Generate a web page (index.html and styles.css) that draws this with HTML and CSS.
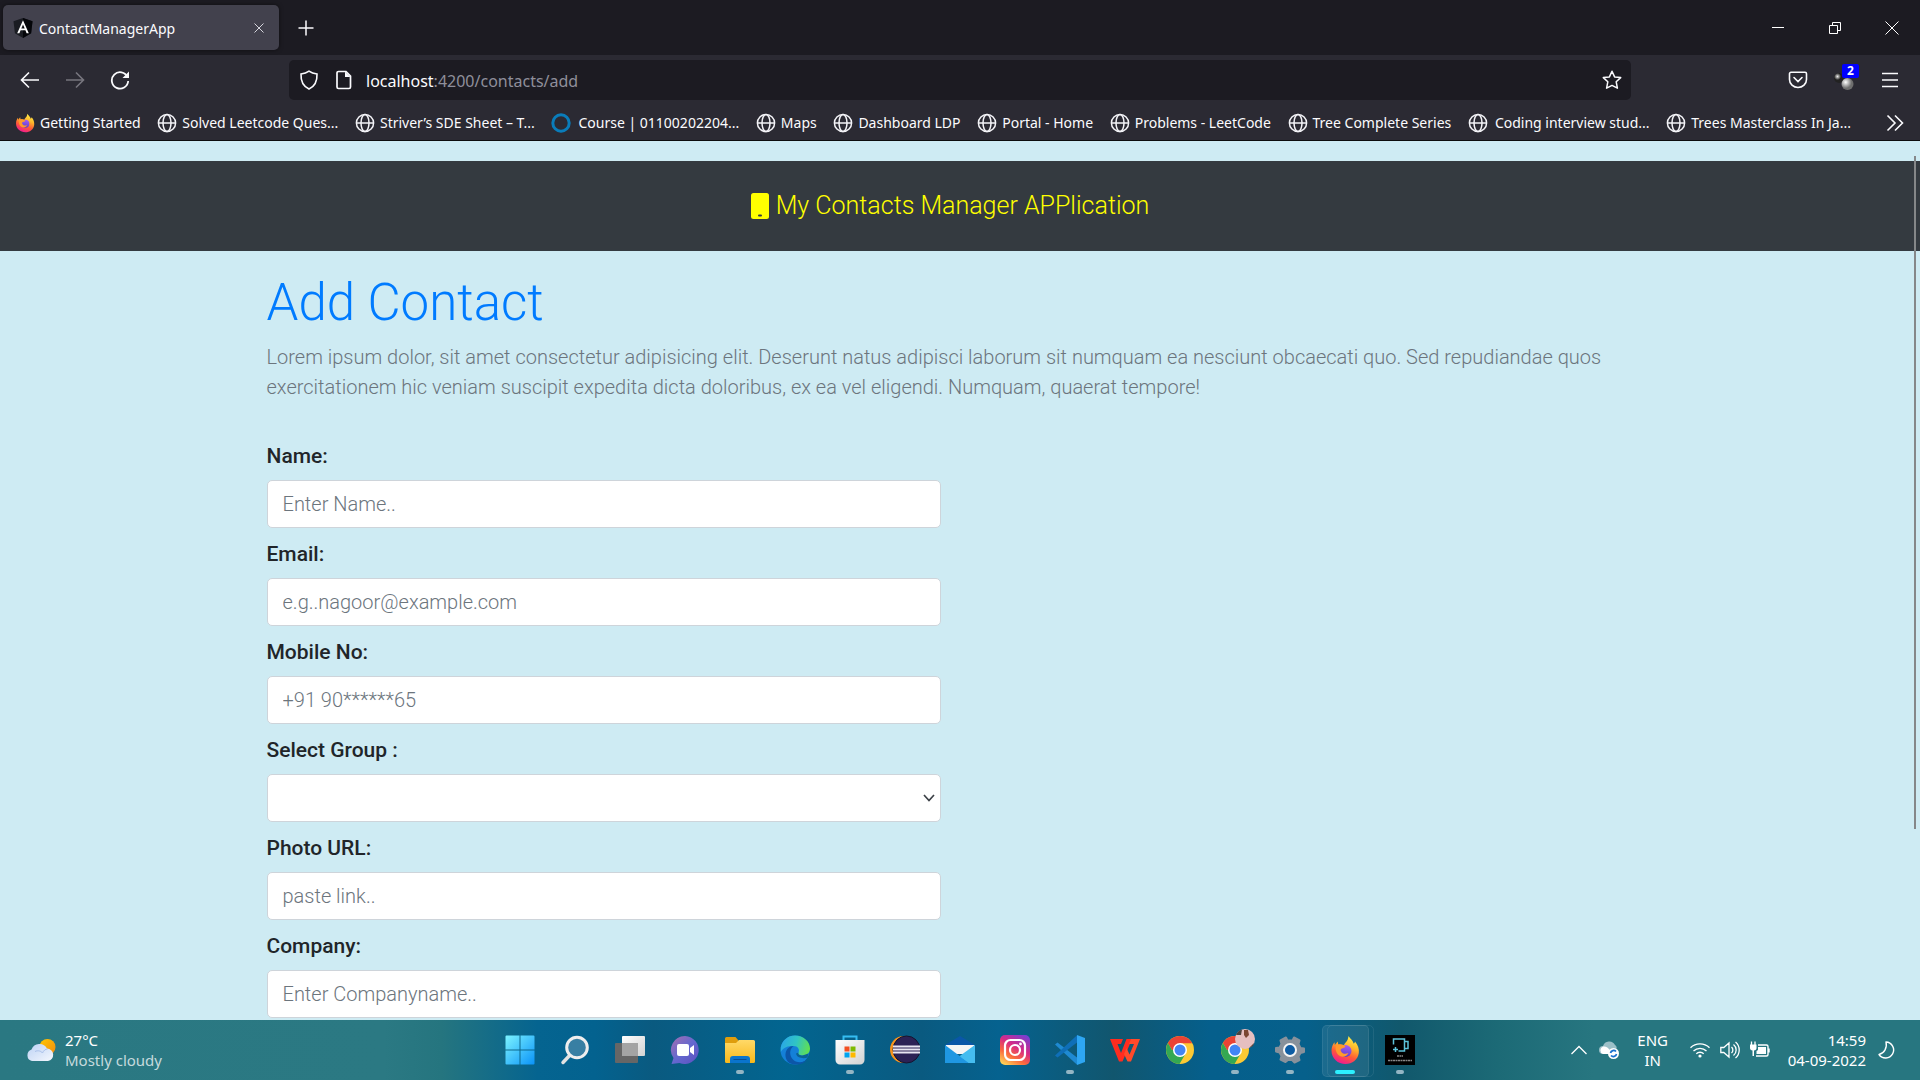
FILE: index.html
```html
<!DOCTYPE html>
<html lang="en">
<head>
<meta charset="utf-8">
<title>ContactManagerApp</title>
<link rel="stylesheet" href="styles.css">
</head>
<body>
<svg class="defs" aria-hidden="true">
  <defs>
    <linearGradient id="fx" x1="0.7" y1="0" x2="0.3" y2="1"><stop offset="0" stop-color="#fff24a"/><stop offset="0.35" stop-color="#ffb52a"/><stop offset="0.65" stop-color="#ff5a36"/><stop offset="1" stop-color="#f0149a"/></linearGradient>
    <linearGradient id="fxb" x1="0.6" y1="0" x2="0.4" y2="1"><stop offset="0" stop-color="#a35cf5"/><stop offset="1" stop-color="#5c3fc8"/></linearGradient>
    <symbol id="firefox" viewBox="0 0 30 30">
      <path fill="url(#fx)" d="M18.500 1c1 2 4.600 4.200 5 7.500 1-.4 1.400-1.200 1.500-2 3 3.500 4.300 7.500 3.800 11.500C28 24.500 22.300 29 15.500 29 8 29 1.500 23.700 1.500 15.500c0-3.700 1.500-6.500 3-8.300L4.800 10l3-3.500.4 3c1.800-.3 3.800.1 5.500 1 1-2.500 3.300-4 4-6 .4-1.200.6-2.200.8-3.500z"/>
      <circle cx="15.500" cy="16" r="6" fill="url(#fxb)"/>
      <path fill="#ff9a2b" d="M6 10.500c3-1.800 7-1.600 9.500 1-1 1.700-3.500 1.400-4.500 2.500s0 3 1.800 4.200c1.800 1.100 3.700.6 5.700-.2-1.500 3.500-5.500 4.500-8.500 3C6.500 19.300 4.800 14.500 6 10.500z"/>
    </symbol>
    <symbol id="globe" viewBox="0 0 20 20"><g fill="none" stroke="#f4f4f8" stroke-width="1.500"><circle cx="10" cy="10" r="8.600"/><ellipse cx="10" cy="10" rx="4" ry="8.600"/><path d="M1.400 10h17.200"/></g></symbol>
    <symbol id="chrome" viewBox="0 0 30 30">
      <circle cx="15" cy="15" r="14" fill="#fcc934"/>
      <path fill="#ea4335" d="M2.900 8A14 14 0 0 1 27.200 8.200H15V15H7z"/>
      <path fill="#34a853" d="M2.900 8A14 14 0 0 0 14.500 29l6.200-10.500L15 15H7z"/>
      <circle cx="15" cy="15" r="7" fill="#fff"/><circle cx="15" cy="15" r="5.500" fill="#4285f4"/>
    </symbol>
    <linearGradient id="win" x1="0" y1="0" x2="1" y2="1"><stop offset="0" stop-color="#7cf3ff"/><stop offset="1" stop-color="#0a93f8"/></linearGradient>
    <linearGradient id="grey" x1="0" y1="0" x2="1" y2="1"><stop offset="0" stop-color="#fff"/><stop offset="1" stop-color="#d2d2d2"/></linearGradient>
    <linearGradient id="chat" x1="0" y1="0" x2="1" y2="1"><stop offset="0" stop-color="#a56fb0"/><stop offset="0.5" stop-color="#6468cf"/><stop offset="1" stop-color="#5b4fc0"/></linearGradient>
    <linearGradient id="folder" x1="0" y1="0" x2="0" y2="1"><stop offset="0" stop-color="#ffd968"/><stop offset="1" stop-color="#f8b81a"/></linearGradient>
    <linearGradient id="edge" x1="0" y1="0.4" x2="1" y2="0.6"><stop offset="0" stop-color="#2aa7e6"/><stop offset="0.5" stop-color="#30c4c4"/><stop offset="1" stop-color="#62e04e"/></linearGradient>
    <linearGradient id="insta" x1="0.2" y1="1" x2="0.8" y2="0"><stop offset="0" stop-color="#ffcf56"/><stop offset="0.3" stop-color="#fb6a3c"/><stop offset="0.6" stop-color="#d62a86"/><stop offset="1" stop-color="#7a3fd0"/></linearGradient>
    <linearGradient id="cloud" x1="0" y1="0" x2="1" y2="1"><stop offset="0" stop-color="#bcd2f5"/><stop offset="1" stop-color="#f4f7fd"/></linearGradient>
    <linearGradient id="sun" x1="0" y1="0" x2="1" y2="1"><stop offset="0" stop-color="#ffc800"/><stop offset="1" stop-color="#f08a10"/></linearGradient>
    <radialGradient id="ball" cx="0.35" cy="0.35"><stop offset="0" stop-color="#fff"/><stop offset="1" stop-color="#6e6e6e"/></radialGradient>
    <radialGradient id="ballDark" cx="0.35" cy="0.35"><stop offset="0" stop-color="#eee"/><stop offset="0.7" stop-color="#222"/></radialGradient>
  </defs>
</svg>

<header class="browser">
  <div class="tabstrip">
    <div class="tab">
      <svg class="i20" viewBox="0 0 20 20"><path fill="#1a1c22" d="M10 0l9.500 3.200-1.400 12L10 20l-8.100-4.800L.5 3.200z"/><path fill="#05060a" d="M10 0l9.500 3.200-1.400 12L10 20z"/><path fill="#fff" fill-rule="evenodd" d="M10 2.200L4.200 15.200h2.200l1.200-2.900h4.800l1.200 2.900h2.200zM10 6.500l1.700 4H8.300z"/></svg>
      <span class="tab-title">ContactManagerApp</span>
      <button class="plain tab-close" aria-label="Close tab"><svg class="i10" viewBox="0 0 10 10"><path d="M.5.500l9 9M9.500.500l-9 9" stroke="#d5d5dc" fill="none"/></svg></button>
    </div>
    <button class="plain newtab" aria-label="New tab"><svg class="i16" viewBox="0 0 16 16"><path d="M8 .500v15M.500 8h15" stroke="#fbfbfe" stroke-width="1.500"/></svg></button>
    <div class="window-buttons">
      <button class="plain winbtn" aria-label="Minimize"><svg class="i14" viewBox="0 0 14 14"><path d="M1 6.500h12" stroke="#fff"/></svg></button>
      <button class="plain winbtn" aria-label="Restore"><svg class="i14" viewBox="0 0 14 14"><path d="M1.500 4.500h8v8h-8zM4.500 4V1.500h8v8H10" stroke="#fff" fill="none"/></svg></button>
      <button class="plain winbtn" aria-label="Close"><svg class="i14" viewBox="0 0 14 14"><path d="M.5.500l13 13M13.500.500l-13 13" stroke="#fff"/></svg></button>
    </div>
  </div>

  <div class="toolbar">
    <div class="nav-buttons">
      <button class="plain navbtn" aria-label="Back"><svg class="i20" viewBox="0 0 20 20"><path d="M19 10H2M9 2.500L1.500 10 9 17.500" stroke="#fbfbfe" stroke-width="1.600" fill="none"/></svg></button>
      <button class="plain navbtn" aria-label="Forward" disabled><svg class="i20" viewBox="0 0 20 20"><path d="M1 10h17M11 2.500l7.500 7.500-7.500 7.500" stroke="#77767e" stroke-width="1.600" fill="none"/></svg></button>
      <button class="plain navbtn" aria-label="Reload"><svg class="i20" viewBox="0 0 20 20"><path d="M17.500 7A8.200 8.200 0 1 0 18.200 11" stroke="#fbfbfe" stroke-width="1.800" fill="none"/><path d="M19 1.500V8h-6.500z" fill="#fbfbfe"/></svg></button>
    </div>
    <div class="urlbar">
      <svg class="i20" viewBox="0 0 20 20"><path d="M10 1.200c2.500 1.800 5 2.500 8 2.800.3 6.500-1.500 12-8 15C3.500 16 1.700 10.500 2 4c3-.3 5.500-1 8-2.800z" fill="none" stroke="#fbfbfe" stroke-width="1.600"/></svg>
      <svg class="i20 doc" viewBox="0 0 20 20"><path d="M4.500 1.500h7.500l4.500 4.500v11a1.500 1.500 0 0 1-1.500 1.500H4.500A1.500 1.500 0 0 1 3 17V3a1.500 1.500 0 0 1 1.500-1.500z" fill="none" stroke="#fbfbfe" stroke-width="1.700"/><path d="M11 1.500v5.500h5.500z" fill="#fbfbfe"/></svg>
      <div class="address" role="textbox" aria-label="Address" contenteditable="true" spellcheck="false">localhost<span class="address-rest">:4200/contacts/add</span></div>
      <button class="plain" aria-label="Bookmark this page"><svg class="i20" viewBox="0 0 20 20"><path d="M10 1.300l2.600 5.600 6.100.7-4.500 4.200 1.200 6.400L10 15.400l-5.400 2.800 1.200-6.400L1.300 7.600l6.100-.7z" fill="none" stroke="#fbfbfe" stroke-width="1.500" stroke-linejoin="round"/></svg></button>
    </div>
    <div class="tool-buttons">
      <button class="plain toolbtn" aria-label="Save to Pocket"><svg class="i20" viewBox="0 0 20 20"><path d="M3 2.300h14a1.500 1.500 0 0 1 1.500 1.500V9.500a8.500 8 0 0 1-17 0V3.800A1.500 1.500 0 0 1 3 2.300zM6 7.500l4 4 4-4" fill="none" stroke="#fbfbfe" stroke-width="1.600" stroke-linecap="round"/></svg></button>
      <button class="plain toolbtn ext" aria-label="Extension"><svg class="i20" viewBox="0 0 20 20"><circle cx="5" cy="8" r="5" fill="url(#ballDark)"/><circle cx="13.500" cy="14" r="6" fill="url(#ball)"/></svg><span class="ext-count">2</span></button>
      <button class="plain toolbtn" aria-label="Menu"><svg class="i16" viewBox="0 0 16 16"><path d="M0 1.500h16M0 8h16M0 14.500h16" stroke="#fbfbfe" stroke-width="1.500"/></svg></button>
    </div>
  </div>

  <nav class="bookmarks" aria-label="Bookmarks">
    <div class="bookmark-list">
      <a href="#" class="bookmark"><svg class="i20"><use href="#firefox"/></svg>Getting Started</a>
      <a href="#" class="bookmark"><svg class="i20"><use href="#globe"/></svg>Solved Leetcode Ques...</a>
      <a href="#" class="bookmark"><svg class="i20"><use href="#globe"/></svg>Striver’s SDE Sheet – T...</a>
      <a href="#" class="bookmark"><svg class="i20" viewBox="0 0 20 20"><circle cx="10" cy="10" r="8.200" fill="none" stroke="#0a7cba" stroke-width="3"/></svg><span class="wide">Course | 01100202204...</span></a>
      <a href="#" class="bookmark"><svg class="i20"><use href="#globe"/></svg>Maps</a>
      <a href="#" class="bookmark"><svg class="i20"><use href="#globe"/></svg>Dashboard LDP</a>
      <a href="#" class="bookmark"><svg class="i20"><use href="#globe"/></svg>Portal - Home</a>
      <a href="#" class="bookmark"><svg class="i20"><use href="#globe"/></svg>Problems - LeetCode</a>
      <a href="#" class="bookmark"><svg class="i20"><use href="#globe"/></svg>Tree Complete Series</a>
      <a href="#" class="bookmark"><svg class="i20"><use href="#globe"/></svg><span class="wide">Coding interview stud...</span></a>
      <a href="#" class="bookmark"><svg class="i20"><use href="#globe"/></svg>Trees Masterclass In Ja...</a>
    </div>
    <button class="plain" aria-label="More bookmarks"><svg class="i18" viewBox="0 0 18 18"><path d="M1.500 1.500L9 9l-7.500 7.500M9 1.500L16.500 9 9 16.500" fill="none" stroke="#fbfbfe" stroke-width="1.600"/></svg></button>
  </nav>
</header>

<main class="page">
  <nav class="navbar">
    <a href="#" class="brand"><svg class="phone" viewBox="0 0 18 26"><rect width="18" height="26" rx="2.500" fill="#ff0"/><rect x="7" y="21.500" width="4" height="2" rx="1" fill="#343a40"/></svg>My Contacts Manager APPlication</a>
  </nav>
  <div class="container">
    <h1 class="heading">Add Contact</h1>
    <p class="lead">Lorem ipsum dolor, sit amet consectetur adipisicing elit. Deserunt natus adipisci laborum sit numquam ea nesciunt obcaecati quo. Sed repudiandae quos exercitationem hic veniam suscipit expedita dicta doloribus, ex ea vel eligendi. Numquam, quaerat tempore!</p>
    <form class="form">
      <div class="field"><label for="name">Name:</label><input class="control" id="name" type="text" placeholder="Enter Name.."></div>
      <div class="field"><label for="email">Email:</label><input class="control" id="email" type="email" placeholder="e.g..nagoor@example.com"></div>
      <div class="field"><label for="mobile">Mobile No:</label><input class="control" id="mobile" type="tel" placeholder="+91 90******65"></div>
      <div class="field"><label for="group">Select Group :</label>
        <div class="select"><select class="control" id="group"><option></option></select><svg class="caret" viewBox="0 0 12 8"><path d="M1 1l5 5.500L11 1" fill="none" stroke="#3c4147" stroke-width="1.700"/></svg></div></div>
      <div class="field"><label for="photo">Photo URL:</label><input class="control" id="photo" type="url" placeholder="paste link.."></div>
      <div class="field"><label for="company">Company:</label><input class="control" id="company" type="text" placeholder="Enter Companyname.."></div>
    </form>
  </div>
  <div class="scroll-thumb"></div>
</main>

<footer class="taskbar">
  <button class="plain weather">
    <svg class="weather-icon" viewBox="0 0 30 22"><circle cx="21.500" cy="8" r="8" fill="url(#sun)"/><path fill="url(#cloud)" d="M6 22a6 6 0 0 1-.5-11.500A8.500 8.500 0 0 1 21 9.500 6.300 6.300 0 0 1 22 22z"/><path fill="none" stroke="#a9c0ea" d="M9 12.500c3-1.500 6-.5 7.500 1.500 1-2.500 3-4 5-4"/></svg>
    <span class="weather-text"><span>27°C</span><span class="dim">Mostly cloudy</span></span>
  </button>

  <div class="apps">
    <button class="plain app" aria-label="Start"><svg class="i30" viewBox="0 0 30 30"><path fill="url(#win)" d="M0.500 1.500a1 1 0 0 1 1-1H14.500v14H.500zM15.500.500h13a1 1 0 0 1 1 1v13h-14zM.500 15.500h14v14h-13a1 1 0 0 1-1-1zM15.500 15.500h14v13a1 1 0 0 1-1 1h-13z"/></svg></button>
    <button class="plain app" aria-label="Search"><svg class="i30" viewBox="0 0 30 30"><path d="M11 19L3 27.500" stroke="#e2e2e2" stroke-width="3.500" stroke-linecap="round"/><circle cx="17" cy="12.500" r="10.300" fill="#387fa3" stroke="#eee" stroke-width="3"/></svg></button>
    <button class="plain app" aria-label="Task view"><svg class="i30" viewBox="0 0 30 30"><rect x="7" y="1" width="23" height="20" rx="1" fill="url(#grey)"/><rect y="8" width="23" height="20" rx="1" fill="#666"/><rect x="7" y="8" width="16" height="13" fill="#a4a4a4"/></svg></button>
    <button class="plain app" aria-label="Chat"><svg class="i30" viewBox="0 0 30 30"><path fill="url(#chat)" d="M15 1a14 14 0 1 1-5.500 27L1.500 29l2-6A14 14 0 0 1 15 1z"/><rect x="7" y="9" width="12" height="12" rx="2" fill="#fff"/><path d="M20 13l4-3v10l-4-3z" fill="#fff"/></svg></button>
    <button class="plain app" aria-label="File Explorer"><svg class="i30" viewBox="0 0 30 30"><path d="M0 3.500A1.500 1.500 0 0 1 1.500 2h9l3 3.500V9H0z" fill="#df9d0c"/><path fill="url(#folder)" d="M0 8h11l3-3h14.500A1.500 1.500 0 0 1 30 6.500v20a1.500 1.500 0 0 1-1.500 1.500h-27A1.500 1.500 0 0 1 0 26.500z"/><path d="M5 28v-4a3 3 0 0 1 3-3h14a3 3 0 0 1 3 3v4z" fill="#0a74cc"/><path d="M8.500 24.500h13" stroke="#084d92"/></svg><span class="dot"></span></button>
    <button class="plain app" aria-label="Edge"><svg class="i30" viewBox="0 0 30 30"><circle cx="15" cy="15" r="14.500" fill="#1480d8"/><path fill="url(#edge)" d="M.8 12C2.500 5 8 .500 15 .500c8.500 0 15 6 15 13 0 4.500-3.500 7-7.500 7-2.500 0-5-1-4-3 1.500-3-.5-6.500-5-6.500C8 11 3.500 12 .8 17z"/><path fill="#0c56a8" d="M13.500 11c-4 3-4.500 9-1 13s10 4.500 15 .500A14.500 14.500 0 0 1 15 29.500C8 29.500 5 24 5.500 19s4-8 8-8z"/><path fill="#0a6295" d="M18.500 17.500c-1 2 1.500 3 4 3l6-2-1 4c-4 1.500-11 .500-11.500-4z"/></svg></button>
    <button class="plain app" aria-label="Microsoft Store"><svg class="i30" viewBox="0 0 30 30"><path d="M8.500 6V1.500h13V6" fill="none" stroke="#35bdf2" stroke-width="2"/><path fill="url(#grey)" d="M.500 5h29v20a4.500 4.500 0 0 1-4.500 4.500H5A4.500 4.500 0 0 1 .500 25z"/><path fill="#f25022" d="M9.500 11.500h5v5h-5z"/><path fill="#7fba00" d="M15.500 11.500h5v5h-5z"/><path fill="#00a4ef" d="M9.500 17.500h5v5h-5z"/><path fill="#ffb900" d="M15.500 17.500h5v5h-5z"/></svg><span class="dot"></span></button>
    <button class="plain app" aria-label="Eclipse"><svg class="i30" viewBox="0 0 30 30"><circle cx="13.500" cy="14.500" r="13.500" fill="#f7941e"/><circle cx="16.500" cy="14.500" r="13.500" fill="#2c2255" stroke="#15142e"/><path d="M3 11.500h27M3 14.500h27M3 17.500h27" stroke="#e8e6f2" stroke-width="1.800"/></svg></button>
    <button class="plain app" aria-label="Mail"><svg class="i30" viewBox="0 0 30 30"><path d="M0 10l15-9 15 9v5H0z" fill="#0a57a8"/><path d="M1 10h28v9H1z" fill="#f5f5f5"/><path d="M30 10v18H5z" fill="#45bdf0"/><path d="M0 10l24 18H0z" fill="#1f97e2"/><path d="M30 10v18h-6l-8.500-6.300z" fill="#45bdf0"/></svg></button>
    <button class="plain app" aria-label="Instagram"><svg class="i30" viewBox="0 0 30 30"><rect width="30" height="30" rx="5" fill="url(#insta)"/><g fill="none" stroke="#fff" stroke-width="2.200"><rect x="5" y="5" width="20" height="20" rx="5.500"/><circle cx="15" cy="15" r="5"/></g><circle cx="20.500" cy="9" r="1.400" fill="#fff"/></svg></button>
    <button class="plain app" aria-label="Visual Studio Code"><svg class="i30" viewBox="0 0 30 30"><path d="M0 9.500l2.500-2L22 22.500v7.200z" fill="#1f8ad2"/><path d="M0 20.500l2.500 2L22 7.500V.300z" fill="#0f6fb8"/><path d="M22 0l8 3v24l-8 3z" fill="#2ea6f2"/></svg><span class="dot"></span></button>
    <button class="plain app" aria-label="WPS Office"><svg class="i30" viewBox="0 0 30 30"><path fill="#ff2c1f" d="M0 4h13l-2 5H7.500l3.500 9 5.500-14H22l-9.500 22.500H9z"/><path fill="#ff4a2a" d="M21 4h9l-9 22.500h-3.500L14 19l2.500-6 3 6.500L24 9h-5z"/></svg></button>
    <button class="plain app" aria-label="Chrome"><svg class="i30"><use href="#chrome"/></svg></button>
    <button class="plain app" aria-label="Chrome profile"><svg class="i30"><use href="#chrome"/></svg><svg class="avatar" viewBox="0 0 20 20"><circle cx="10" cy="10" r="10" fill="#e6bfc0"/><path d="M9 1h4l1 5-3 3-2-3z" fill="#7c4632"/><path d="M1 6a10 10 0 0 1 6-5.500L6 6z" fill="#4b443e"/><path d="M14 19l5-5-1 3z" fill="#5a463e"/></svg><span class="dot"></span></button>
    <button class="plain app" aria-label="Settings"><svg class="i30" viewBox="0 0 30 30"><path fill="#88919b" stroke="#88919b" stroke-width="2" stroke-linejoin="round" d="M11 2.500l1.500 3h5l1.500-3 5.500 3-1 3.500 2 4 3.500.500v3.500l-3.500 1-2 3.500 1 3.500-5 2.500-2.500-2.500h-4L10.500 27l-5-2.500 1-3.500-2-3.500L1 16.500V13l3.500-.500L6.500 9l-1-3.500z"/><circle cx="15" cy="15" r="6" fill="#0d5da4" stroke="#f4f4f4" stroke-width="2"/></svg><span class="dot"></span></button>
    <button class="plain app active" aria-label="Firefox"><svg class="i30"><use href="#firefox"/></svg><span class="dot"></span></button>
    <button class="plain app" aria-label="Free Screen Recorder"><svg class="i30" viewBox="0 0 30 30"><rect width="30" height="30" fill="#000"/><path d="M8.500 9.500V4h11v2.500h3.500v7h-3.500V16h-6M19.500 6.500v7M10.500 12v5M8 14.500h5" fill="none" stroke="#5cc4dc" stroke-width="1.500"/><path d="M12 21h6M3 25.500h24" stroke="#888" stroke-width="1.500" stroke-dasharray="2 .5"/></svg><span class="dot"></span></button>
  </div>

  <div class="tray">
    <button class="plain" aria-label="Show hidden icons"><svg class="i16" viewBox="0 0 16 16"><path d="M.5 12L8 4.500 15.500 12" fill="none" stroke="#fff" stroke-width="1.300"/></svg></button>
    <button class="plain sync" aria-label="OneDrive"><svg class="i20" viewBox="0 0 20 20"><path d="M4 14a4 4 0 0 1 0-8 6.500 6.500 0 0 1 12-1c2 1 2 3 1 5l-5 4z" fill="#9cc0c8"/><path d="M4 14a4 4 0 0 1 0-7.500c3-.5 5 1 7 4l-1 3.500z" fill="#fff"/><circle cx="14.500" cy="13.500" r="5.500" fill="#fff"/><path d="M11.500 13a3.200 3.200 0 0 1 5.500-1.500M17.500 14a3.200 3.200 0 0 1-5.500 1.500" fill="none" stroke="#1670cf" stroke-width="1.700"/></svg></button>
    <button class="plain lang"><span>ENG</span><span>IN</span></button>
    <button class="plain status" aria-label="Network, volume, battery">
      <svg class="i20" viewBox="0 0 20 20"><g fill="none" stroke="#fff" stroke-width="1.300"><path d="M.5 7.800a13.400 13.400 0 0 1 19 0M3.500 11a9.200 9.200 0 0 1 13 0M6.300 13.800a5.200 5.200 0 0 1 7.400 0"/></g><circle cx="10" cy="16" r="1.600" fill="#fff"/></svg>
      <svg class="i20" viewBox="0 0 20 20"><path d="M.8 7.500h3L9 3v14l-5.200-4.500h-3zM11.500 7a4 4 0 0 1 0 6M13.500 4.500a7 7 0 0 1 0 11M15.500 2a10.500 10.500 0 0 1 0 16" fill="none" stroke="#fff" stroke-width="1.300"/></svg>
      <svg class="i20" viewBox="0 0 20 20"><path d="M8 5h8.500a1.500 1.500 0 0 1 1.500 1.500v8a1.500 1.500 0 0 1-1.500 1.500H6M19 8.500v4" fill="none" stroke="#fff" stroke-width="1.400"/><path d="M8 7h8v7H6.500v-3L8 10zM0 4.500h6.500V8c0 1.500-1 2.300-2.500 2.500V16H2.500v-5.500C1 10.300 0 9.500 0 8z" fill="#fff"/><path d="M1.500 5V1.500M5 5V1.500" stroke="#fff" stroke-width="1.300"/></svg>
    </button>
    <button class="plain clock"><span>14:59</span><span>04-09-2022</span></button>
    <button class="plain" aria-label="Focus assist"><svg class="i18" viewBox="0 0 18 18"><path d="M8 1a8 8 0 1 1-7 12.500C6 12.500 9.500 7 8 1z" fill="none" stroke="#fff" stroke-width="1.400" stroke-linejoin="round"/></svg></button>
  </div>
</footer>
</body>
</html>
```
FILE: styles.css
```css
* { box-sizing: border-box; }

body {
  margin: 0;
  height: 100vh;
  display: flex;
  flex-direction: column;
  overflow: hidden;
  font-family: "Noto Sans", "Open Sans", sans-serif;
  font-size: 14px;
  color: #fbfbfe;
  background: #ceebf3;
}

svg { display: block; flex: none; }
.defs { position: absolute; width: 0; height: 0; }
.i10 { width: 10px; height: 10px; }
.i14 { width: 14px; height: 14px; }
.i16 { width: 16px; height: 16px; }
.i18 { width: 18px; height: 18px; }
.i20 { width: 20px; height: 20px; }
.i30 { width: 30px; height: 30px; }

.plain {
  display: flex;
  align-items: center;
  justify-content: center;
  padding: 0;
  border: 0;
  background: none;
  color: inherit;
  font: inherit;
}

/* Browser window */
.browser { flex: none; background: #2b2a33; border-bottom: 1px solid #0c0c0d; }

.tabstrip {
  display: flex;
  align-items: center;
  height: 55px;
  padding-left: 3px;
  background: #1c1b22;
}
.tab {
  display: flex;
  align-items: center;
  gap: 6px;
  width: 276px;
  height: 45px;
  padding: 0 10px;
  border-radius: 5px;
  background: #42414d;
  box-shadow: 0 0 4px rgba(0, 0, 0, .5);
}
.tab-title { flex: 1; padding-top: 1px; }
.tab-close { width: 20px; height: 20px; }
.newtab { width: 53px; height: 45px; }
.window-buttons { display: flex; margin-left: auto; }
.winbtn { width: 57px; height: 45px; }

.toolbar {
  display: grid;
  grid-template-columns: 289px minmax(0, 1fr) 289px;
  align-items: center;
  height: 50px;
}
.nav-buttons { display: flex; padding-left: 7px; }
.navbtn { width: 45px; height: 40px; }
.urlbar {
  display: flex;
  align-items: center;
  height: 40px;
  padding: 0 9px 0 10px;
  border-radius: 5px;
  background: #1c1b22;
}
.doc { margin: 0 12px 0 15px; }
.address { flex: 1; padding-top: 2px; font-size: 16px; outline: none; }
.address-rest { color: #8f8f9b; }
.tool-buttons { display: flex; justify-content: flex-end; padding-right: 7px; }
.toolbtn { width: 46px; height: 40px; }
.ext { position: relative; }
.ext-count {
  position: absolute;
  top: 4px;
  right: 8px;
  width: 17px;
  height: 14px;
  border-radius: 2px;
  background: #00f;
  font-size: 12px;
  font-weight: 700;
  line-height: 14px;
  text-align: center;
}

.bookmarks {
  display: flex;
  align-items: center;
  justify-content: space-between;
  height: 35px;
  padding: 0 16px 0 15px;
}
.bookmark-list {
  display: flex;
  flex: 1;
  justify-content: space-between;
  margin-right: 35px;
}
.bookmark {
  display: flex;
  align-items: center;
  gap: 5px;
  color: inherit;
  text-decoration: none;
  white-space: nowrap;
}
.wide { padding-left: 2px; }

/* Application page */
.page {
  position: relative;
  flex: 1;
  min-height: 0;
  overflow: hidden;
  padding-top: 20px;
  background: #ceebf3;
  color: #212529;
  font-family: Roboto, "Open Sans", sans-serif;
  font-size: 20px;
  font-weight: 300;
  line-height: 30px;
}
.navbar {
  display: flex;
  align-items: center;
  justify-content: center;
  height: 90px;
  padding-right: 20px;
  background: #343a40;
}
.brand {
  display: flex;
  align-items: center;
  gap: 7px;
  color: #ff0;
  font-size: 25px;
  text-decoration: none;
}
.phone { width: 18px; height: 26px; }

.container {
  max-width: 1425px;
  margin: 0 auto;
  padding: 22px 19px 0;
}
.heading {
  margin: 0 0 9px;
  color: #007bff;
  font-size: 51px;
  font-weight: 300;
  line-height: 60px;
}
.lead { margin: 0 0 39px; color: #6c757d; }
.form { width: 50%; padding-right: 19px; }
.field { margin-bottom: 11px; }
.field label {
  display: block;
  margin-bottom: 9px;
  font-size: 21px;
  font-weight: 500;
}
.control {
  display: block;
  width: 100%;
  height: 48px;
  padding: 0 15px;
  border: 1px solid #ced4da;
  border-radius: 5px;
  background: #fff;
  color: #495057;
  font: inherit;
  appearance: none;
}
.control::placeholder { color: #6c757d; opacity: 1; }
.select { position: relative; }
.caret {
  position: absolute;
  top: 20px;
  right: 6px;
  width: 12px;
  height: 8px;
  pointer-events: none;
}
.scroll-thumb {
  position: absolute;
  top: 15px;
  right: 4px;
  bottom: 191px;
  width: 2px;
  background: #858789;
}

/* Taskbar */
.taskbar {
  flex: none;
  display: grid;
  grid-template-columns: 1fr auto 1fr;
  height: 60px;
  font-size: 15px;
  line-height: 20px;
  color: #fff;
  background: linear-gradient(90deg, #2a7882 0%, #2b7983 20%, #25757f 23%, #056490 28%, #03628f 31%, #0a5a80 34%, #026590 41%, #0a5a80 48%, #05628f 52%, #11566e 58%, #055f8c 63%, #06608b 68%, #11586c 73%, #1c6a76 78%, #277680 83%, #277680 100%);
}
.weather { justify-self: start; gap: 9px; padding-left: 26px; }
.weather-icon { width: 30px; height: 22px; }
.weather-text, .lang, .clock { display: flex; flex-direction: column; text-align: left; }
.dim { color: #c5dadd; }

.apps { display: flex; align-items: center; }
.app { position: relative; width: 55px; height: 60px; }
.app > svg { position: relative; }
.dot {
  position: absolute;
  bottom: 6px;
  left: 50%;
  width: 8px;
  height: 4px;
  margin-left: -4px;
  border-radius: 2px;
  background: #93b5c4;
}
.active .dot { width: 20px; margin-left: -10px; background: #2cf0ff; }
.active::before, .active::after {
  content: "";
  position: absolute;
  top: 5px;
  left: 4px;
  width: 45px;
  height: 50px;
  border: 1px solid rgba(255, 255, 255, .08);
  border-radius: 5px;
  background: rgba(255, 255, 255, .08);
}
.active::after { left: 9px; background: none; }
.app > .avatar {
  position: absolute;
  top: 9px;
  right: 8px;
  width: 20px;
  height: 20px;
}

.tray {
  display: flex;
  align-items: center;
  justify-content: flex-end;
  gap: 12px;
  padding-right: 24px;
}
.lang { width: 44px; text-align: center; }
.status { gap: 10px; margin: 0 6px 0 3px; }
.clock { align-items: flex-end; }
```
